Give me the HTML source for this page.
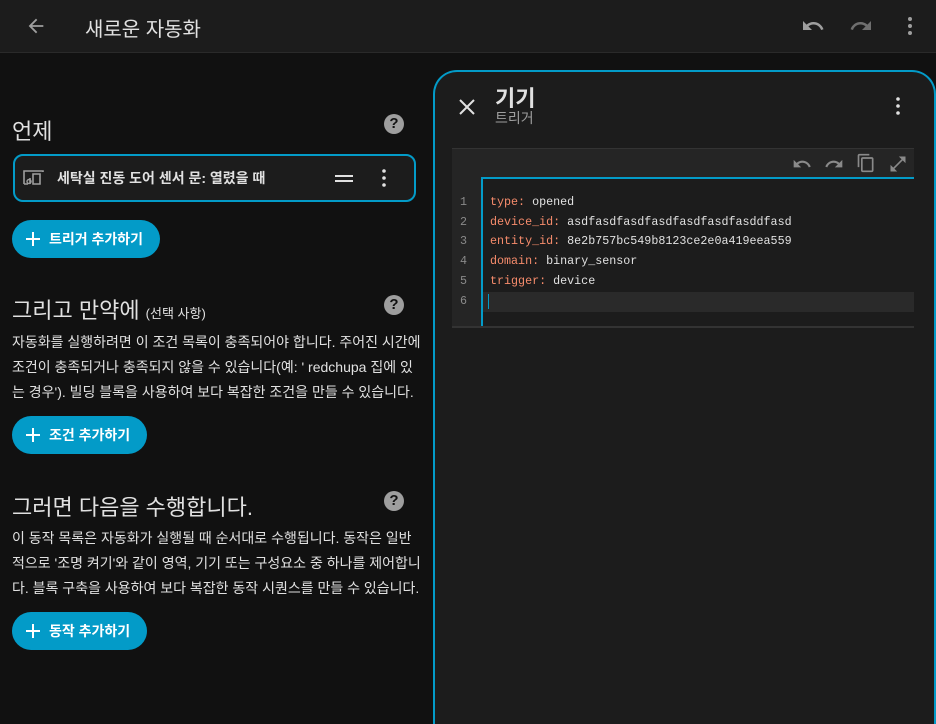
<!DOCTYPE html><html><head><meta charset="utf-8"><style>
*{box-sizing:border-box;margin:0;padding:0}
html{width:936px;height:724px;overflow:hidden}
body{width:936px;height:724px;background:#111;overflow:hidden;font-family:"Liberation Sans","Noto Sans CJK KR",sans-serif;color:#e1e1e1;position:relative}
.top{position:absolute;left:0;top:0;width:936px;height:53px;background:#1c1c1c;border-bottom:1px solid #2a2a2a}
.abs{position:absolute}
.h2{font-size:22px;color:#e1e1e1}
.help{width:20px;height:20px;border-radius:50%;background:#9e9e9e;color:#111;font-weight:bold;font-size:15px;text-align:center;line-height:20px}
.btn{height:38px;border-radius:19px;background:#039bc8;color:#fff;font-weight:bold;font-size:14px;line-height:38px;padding-left:37px}
.btn:before{content:"";position:absolute;left:14px;top:18px;width:14px;height:2px;background:#fff}
.btn:after{content:"";position:absolute;left:20px;top:12px;width:2px;height:14px;background:#fff}
.p{font-size:14px;line-height:25px;color:#e1e1e1}
.code{font-family:"Liberation Mono",monospace;font-size:11.7px;line-height:19.7px}
.k{color:#f78c6c}
</style></head><body>
<div class="top">
<svg class="abs" style="left:25px;top:15px" width="22" height="22" viewBox="0 0 24 24"><path d="M20 11H7.8l5.6-5.6L12 4l-8 8 8 8 1.4-1.4L7.8 13H20z" fill="#9e9e9e"/></svg>
<div class="abs" style="left:85px;top:13px;font-size:20px;color:#e1e1e1">새로운 자동화</div>
<svg class="abs" style="left:801px;top:14px" width="24" height="24" viewBox="0 0 24 24"><path d="M12.5 8c-2.65 0-5.05 1-6.9 2.6L2 7v9h9l-3.6-3.6c1.4-1.2 3.2-1.9 5.1-1.900 3.5 0 6.5 2.3 7.6 5.5l2.4-.8C21 11 17.1 8 12.5 8z" fill="#9e9e9e"/></svg>
<svg class="abs" style="left:849px;top:14px" width="24" height="24" viewBox="0 0 24 24"><path d="M18.4 10.6C16.6 9 14.2 8 11.5 8 6.9 8 3 11 1.6 15.2l2.4.8C5 12.8 8 10.5 11.5 10.5c1.9 0 3.7.7 5.1 1.9L13 16h9V7z" fill="#6f6f6f"/></svg>
<svg class="abs" style="left:898px;top:14px" width="24" height="24" viewBox="0 0 24 24"><circle cx="12" cy="5" r="2" fill="#9e9e9e"/><circle cx="12" cy="12" r="2" fill="#9e9e9e"/><circle cx="12" cy="19" r="2" fill="#9e9e9e"/></svg>
</div>

<div class="abs h2" style="left:12px;top:114px">언제</div>
<div class="abs help" style="left:384px;top:114px">?</div>
<div class="abs" style="left:13px;top:154px;width:403px;height:48px;border:2px solid #039bc8;border-radius:10px;background:#1c1c1c"></div>
<svg class="abs" style="left:22px;top:168px" width="22" height="20" viewBox="0 0 22 20"><path d="M2 16V3h19v1M2 16h4M11 6h7v10h-7zM8 10v6" stroke="#9e9e9e" stroke-width="1.6" fill="none"/><circle cx="7" cy="13.5" r="2" stroke="#9e9e9e" stroke-width="1.4" fill="none"/></svg>
<div class="abs" style="left:57px;top:168px;font-size:14px;font-weight:bold;color:#e1e1e1">세탁실 진동 도어 센서 문: 열렸을 때</div>
<div class="abs" style="left:335px;top:175px;width:18px;height:2px;background:#e1e1e1"></div>
<div class="abs" style="left:335px;top:180px;width:18px;height:2px;background:#e1e1e1"></div>
<svg class="abs" style="left:372px;top:166px" width="24" height="24" viewBox="0 0 24 24"><circle cx="12" cy="5" r="1.8" fill="#e1e1e1"/><circle cx="12" cy="12" r="1.8" fill="#e1e1e1"/><circle cx="12" cy="19" r="1.8" fill="#e1e1e1"/></svg>
<div class="abs btn" style="left:12px;top:220px;width:148px">트리거 추가하기</div>

<div class="abs h2" style="left:12px;top:293px">그리고 만약에 <span style="font-size:13px">(선택 사항)</span></div>
<div class="abs help" style="left:384px;top:295px">?</div>
<div class="abs p" style="left:12px;top:330px;width:410px">자동화를 실행하려면 이 조건 목록이 충족되어야 합니다. 주어진 시간에 조건이 충족되거나 충족되지 않을 수 있습니다(예: ' redchupa 집에 있는 경우'). 빌딩 블록을 사용하여 보다 복잡한 조건을 만들 수 있습니다.</div>
<div class="abs btn" style="left:12px;top:416px;width:135px">조건 추가하기</div>

<div class="abs h2" style="left:12px;top:490px">그러면 다음을 수행합니다.</div>
<div class="abs help" style="left:384px;top:491px">?</div>
<div class="abs p" style="left:12px;top:526px;width:410px">이 동작 목록은 자동화가 실행될 때 순서대로 수행됩니다. 동작은 일반적으로 '조명 켜기'와 같이 영역, 기기 또는 구성요소 중 하나를 제어합니다. 블록 구축을 사용하여 보다 복잡한 동작 시퀀스를 만들 수 있습니다.</div>
<div class="abs btn" style="left:12px;top:612px;width:135px">동작 추가하기</div>

<div class="abs" style="left:433px;top:70px;width:503px;height:654px;border:2px solid #039bc8;border-bottom:none;border-radius:24px 24px 0 0;background:#1c1c1c"></div>
<svg class="abs" style="left:455px;top:95px" width="24" height="24" viewBox="0 0 24 24"><path d="M5 5l14 14M19 5L5 19" stroke="#e1e1e1" stroke-width="2"/></svg>
<div class="abs" style="left:495px;top:81px;font-size:22px;font-weight:bold;color:#e1e1e1">기기</div>
<div class="abs" style="left:495px;top:108px;font-size:14px;color:#9e9e9e">트리거</div>
<svg class="abs" style="left:886px;top:94px" width="24" height="24" viewBox="0 0 24 24"><circle cx="12" cy="5" r="1.8" fill="#e1e1e1"/><circle cx="12" cy="12" r="1.8" fill="#e1e1e1"/><circle cx="12" cy="19" r="1.8" fill="#e1e1e1"/></svg>

<div class="abs" style="left:452px;top:148px;width:462px;height:178px;background:#252525;border-top:1px solid #333"></div>
<div class="abs" style="left:452px;top:326px;width:462px;height:2px;background:#333"></div>
<svg class="abs" style="left:792px;top:154px" width="20" height="20" viewBox="0 0 24 24"><path d="M12.5 8c-2.65 0-5.05 1-6.9 2.6L2 7v9h9l-3.6-3.6c1.4-1.2 3.2-1.9 5.1-1.9 3.5 0 6.5 2.3 7.6 5.5l2.4-.8C21 11 17.1 8 12.5 8z" fill="#8a8a8a"/></svg>
<svg class="abs" style="left:824px;top:154px" width="20" height="20" viewBox="0 0 24 24"><path d="M18.4 10.6C16.6 9 14.2 8 11.5 8 6.9 8 3 11 1.6 15.2l2.4.8C5 12.8 8 10.5 11.5 10.5c1.9 0 3.7.7 5.1 1.9L13 16h9V7z" fill="#8a8a8a"/></svg>
<svg class="abs" style="left:856px;top:153px" width="20" height="20" viewBox="0 0 24 24"><path d="M16 1H4c-1.1 0-2 .9-2 2v14h2V3h12V1zm3 4H8c-1.1 0-2 .9-2 2v14c0 1.1.9 2 2 2h11c1.1 0 2-.9 2-2V7c0-1.1-.9-2-2-2zm0 16H8V7h11v14z" fill="#8a8a8a"/></svg>
<svg class="abs" style="left:888px;top:154px" width="20" height="20" viewBox="0 0 24 24"><path d="M21 11V3h-8l3.3 3.3-10 10L3 13v8h8l-3.3-3.3 10-10z" fill="#8a8a8a"/></svg>
<div class="abs" style="left:481px;top:177px;width:433px;height:149px;border-left:2px solid #039bc8;border-top:2px solid #039bc8;background:#1c1c1c"></div>
<div class="abs" style="left:483px;top:292px;width:431px;height:20px;background:#2a2a2a"></div>
<div class="abs" style="left:488px;top:294px;width:1px;height:15px;background:#039bc8"></div>
<div class="abs code" style="left:460px;top:193px;color:#8a8a8a">1<br>2<br>3<br>4<br>5<br>6</div>
<div class="abs code" style="left:490px;top:193px;color:#e1e1e1;white-space:pre"><span class="k">type:</span> opened
<span class="k">device_id:</span> asdfasdfasdfasdfasdfasdfasddfasd
<span class="k">entity_id:</span> 8e2b757bc549b8123ce2e0a419eea559
<span class="k">domain:</span> binary_sensor
<span class="k">trigger:</span> device</div>
</body></html>
